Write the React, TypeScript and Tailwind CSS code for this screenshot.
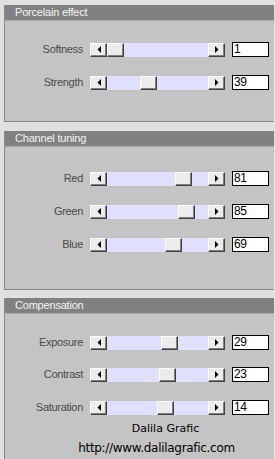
import React from "react";

const font = { fontFamily: '"Liberation Sans", Arial, sans-serif' };

function Btn({ dir }: { dir: "l" | "r" }) {
  return (
    <div className="flex items-center justify-center h-full w-[17px] bg-[#ececec] border border-t-white border-l-white border-r-[#404040] border-b-[#404040] shadow-[inset_-1px_-1px_0_#808080] shrink-0">
      <svg width="4" height="7" viewBox="0 0 4 7">
        {dir === "l" ? <polygon points="4,0 4,7 0.5,3.5" fill="#000" /> : <polygon points="0,0 0,7 3.5,3.5" fill="#000" />}
      </svg>
    </div>
  );
}

function Row({ label, value, pos, className = "" }: { label: string; value: number; pos: number; className?: string }) {
  return (
    <div className={"flex items-center h-[15px] " + className}>
      <div className="w-[78px] text-right text-[11px] leading-none tracking-[-0.3px] text-[#4a4a4a]" style={font}>
        {label}
      </div>
      <div className="ml-[7px] flex h-[14px] w-[134px]">
        <Btn dir="l" />
        <div className="relative flex-1 bg-[#e0e0fc]">
          <div
            className="absolute top-0 h-full w-[17px] bg-[#ececec] border border-t-white border-l-white border-r-[#404040] border-b-[#404040] shadow-[inset_-1px_-1px_0_#808080]"
            style={{ left: pos }}
          />
        </div>
        <div className="w-[16px] h-full flex">
          <Btn dir="r" />
        </div>
      </div>
      <div
        className="ml-[8px] h-[15px] w-[37px] bg-white border border-black pl-[1px] text-[12px] leading-[13px] tracking-[-0.5px] text-black"
        style={font}
      >
        {value}
      </div>
    </div>
  );
}

function Header({ title }: { title: string }) {
  return (
    <div
      className="h-[16px] bg-[#818181] border-b border-[#a9a9a9] pl-[10px] text-[11px] leading-[15px] text-[#f4f4f4] tracking-[-0.2px]"
      style={font}
    >
      {title}
    </div>
  );
}

export default function App() {
  return (
    <div className="w-[275px] h-[459px] overflow-hidden bg-[#e0e0e0] pl-[4px] pr-[1px] pt-[5px] flex flex-col">
      <div className="bg-[#c4c4c4] border-l border-b border-[#8a8a8a] h-[117px]">
        <Header title="Porcelain effect" />
        <Row label="Softness" value={1} pos={0} className="mt-[21px]" />
        <Row label="Strength" value={39} pos={33} className="mt-[18px]" />
      </div>
      <div className="mt-[9px] bg-[#c4c4c4] border-l border-b border-[#8a8a8a] h-[159px]">
        <Header title="Channel tuning" />
        <Row label="Red" value={81} pos={68} className="mt-[24px]" />
        <Row label="Green" value={85} pos={71} className="mt-[18px]" />
        <Row label="Blue" value={69} pos={58} className="mt-[18px]" />
      </div>
      <div className="mt-[8px] bg-[#c4c4c4] border-l border-[#8a8a8a] flex-1">
        <Header title="Compensation" />
        <Row label="Exposure" value={29} pos={54} className="mt-[21px]" />
        <Row label="Contrast" value={23} pos={52} className="mt-[17px]" />
        <Row label="Saturation" value={14} pos={50} className="mt-[18px]" />
        <div
          className="mt-[7px] h-[14px] pl-[52px] text-center text-[11px] leading-[14px] text-black"
          style={{ fontFamily: '"DejaVu Sans", sans-serif' }}
        >
          Dalila Grafic
        </div>
        <div
          className="mt-[5px] h-[14px] pl-[34px] text-center text-[12px] leading-[14px] text-black tracking-[-0.3px]"
          style={{ fontFamily: '"DejaVu Sans", sans-serif' }}
        >
          http://www.dalilagrafic.com
        </div>
      </div>
    </div>
  );
}
